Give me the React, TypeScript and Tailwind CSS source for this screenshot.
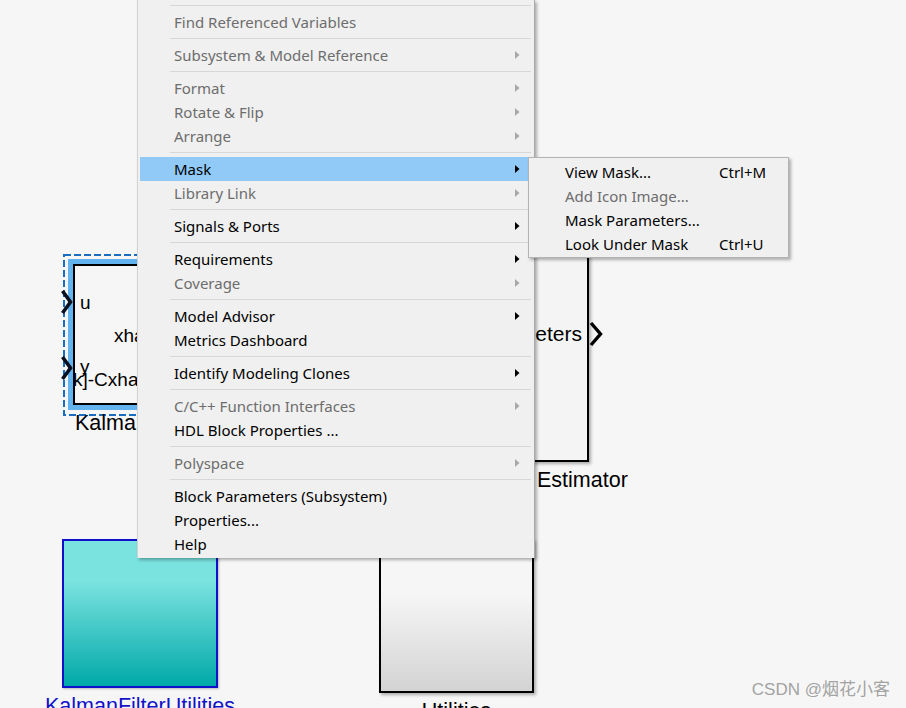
import React from "react";

type Item =
  | { sep: true }
  | { sep?: false; label: string; disabled?: boolean; arrow?: boolean; active?: boolean };

const items: Item[] = [
  { sep: true },
  { label: "Find Referenced Variables", disabled: true },
  { sep: true },
  { label: "Subsystem & Model Reference", disabled: true, arrow: true },
  { sep: true },
  { label: "Format", disabled: true, arrow: true },
  { label: "Rotate & Flip", disabled: true, arrow: true },
  { label: "Arrange", disabled: true, arrow: true },
  { sep: true },
  { label: "Mask", arrow: true, active: true },
  { label: "Library Link", disabled: true, arrow: true },
  { sep: true },
  { label: "Signals & Ports", arrow: true },
  { sep: true },
  { label: "Requirements", arrow: true },
  { label: "Coverage", disabled: true, arrow: true },
  { sep: true },
  { label: "Model Advisor", arrow: true },
  { label: "Metrics Dashboard" },
  { sep: true },
  { label: "Identify Modeling Clones", arrow: true },
  { sep: true },
  { label: "C/C++ Function Interfaces", disabled: true, arrow: true },
  { label: "HDL Block Properties ..." },
  { sep: true },
  { label: "Polyspace", disabled: true, arrow: true },
  { sep: true },
  { label: "Block Parameters (Subsystem)" },
  { label: "Properties..." },
  { label: "Help" },
];

const sub = [
  { label: "View Mask...", key: "Ctrl+M" },
  { label: "Add Icon Image...", disabled: true },
  { label: "Mask Parameters..." },
  { label: "Look Under Mask", key: "Ctrl+U" },
];

const sans = { fontFamily: '"Liberation Sans", Arial, sans-serif' };

function Arrow({ disabled }: { disabled?: boolean }) {
  return (
    <svg width="5" height="8" viewBox="0 0 5 8" className="block">
      <polygon points="0,0 4.5,4 0,8" fill={disabled ? "#a8a8a8" : "#000"} />
    </svg>
  );
}

function Chevron({ className }: { className: string }) {
  return (
    <svg width="14" height="26" viewBox="0 0 14 26" className={className}>
      <polyline points="2.5,2 10.5,13 2.5,24" fill="none" stroke="#0b1020" strokeWidth="3.6" />
    </svg>
  );
}

function KalmanBlock() {
  // selected subsystem node on the diagram canvas
  return (
    <div className="absolute left-[62px] top-[253px] w-[200px] h-[164px]">
      <svg className="absolute inset-0" width="200" height="164">
        <rect x="2" y="2" width="196" height="160" fill="none" stroke="#1a6dbf" strokeWidth="2" strokeDasharray="7 3" />
      </svg>
      <div className="absolute left-[6px] top-[6px] w-[180px] h-[151px] bg-[#63b3ee] p-[5px]">
        <div style={sans} className="relative w-full h-full border-2 border-black bg-[#f6f6f6] text-[19px] leading-none text-black">
          <span className="absolute left-[5px] top-[27px]">u</span>
          <span className="absolute left-[39px] top-[60px]">xhat</span>
          <span className="absolute left-[5px] top-[91px]">y</span>
          <span className="absolute left-[-2px] top-[104px]">k]-Cxhat</span>
        </div>
      </div>
      <Chevron className="absolute left-[-2px] top-[36px]" />
      <Chevron className="absolute left-[-2px] top-[102px]" />
      <div style={sans} className="absolute left-[13px] top-[160px] text-[21.5px] leading-none text-black whitespace-nowrap">
        KalmanFilter
      </div>
    </div>
  );
}

function EstimatorBlock() {
  return (
    <div className="absolute left-[380px] top-[200px] w-[230px] h-[300px]">
      <div style={sans} className="w-[209px] h-[262px] border-2 border-black bg-[#f4f4f4] shadow-[2px_2px_3px_rgba(0,0,0,0.3)] flex items-start justify-end pt-[121px] pr-[5px] text-[21px] leading-none text-black">
        Parameters
      </div>
      <svg width="16" height="28" viewBox="0 0 16 28" className="absolute left-[208px] top-[120px]">
        <polyline points="3,3 12.5,14 3,25" fill="none" stroke="#000" strokeWidth="3.4" />
      </svg>
      <div style={sans} className="absolute left-[157px] top-[270px] text-[21.5px] leading-none text-black">Estimator</div>
    </div>
  );
}

function UtilBlock({
  left,
  boxClass,
  label,
  labelClass,
}: {
  left: string;
  boxClass: string;
  label: string;
  labelClass: string;
}) {
  return (
    <div className={`absolute top-[539px] flex flex-col items-center ${left}`}>
      <div className={boxClass} />
      <div style={sans} className={`mt-[8px] text-[21.5px] leading-none whitespace-nowrap ${labelClass}`}>
        {label}
      </div>
    </div>
  );
}

export default function App() {
  return (
    <div className="relative w-[906px] h-[708px] overflow-hidden bg-[#f6f6f6]">
      <KalmanBlock />
      <EstimatorBlock />

      <UtilBlock
        left="left-[45px]"
        boxClass="w-[156px] h-[149px] border-2 border-[#1010cc] bg-[linear-gradient(to_bottom,#7ae2df_0%,#7ae2df_28%,#00a9a9_100%)] shadow-[1px_1px_2px_rgba(0,0,0,0.25)]"
        label="KalmanFilterUtilities"
        labelClass="text-[#1212c8]"
      />
      <UtilBlock
        left="left-[379px]"
        boxClass="w-[155px] h-[154px] border-2 border-black bg-[linear-gradient(to_bottom,#f6f6f6_0%,#f6f6f6_35%,#d3d3d3_100%)] shadow-[2px_2px_3px_rgba(0,0,0,0.3)]"
        label="Utilities"
        labelClass="text-black"
      />

      {/* Watermark */}
      <div
        style={{ fontFamily: '"Liberation Sans", "Noto Sans CJK SC", sans-serif' }}
        className="absolute right-[16px] top-[681px] text-[17px] leading-none text-[#a3a3a3]"
      >
        CSDN @烟花小客
      </div>

      {/* ===== Context menu ===== */}
      <div
        style={{ fontFamily: '"Noto Sans", sans-serif' }}
        className="absolute left-[137px] top-0 w-[398px] bg-[#f0f0f0] border-l border-[#d2d2d2] border-r border-r-[#a9a9a9] shadow-[2px_2px_3px_rgba(0,0,0,0.3)] pl-[2px] pr-[3px] pt-px pb-[2px] text-[15px]"
      >
        {items.map((it, i) =>
          it.sep ? (
            <div key={i} className="h-[9px] flex items-center pl-[30px]">
              <div className="h-px w-full bg-[#d7d7d7]" />
            </div>
          ) : (
            <div
              key={i}
              className={`h-6 flex items-center justify-between pl-[34px] pr-[11px] ${it.active ? "bg-[#91c9f7]" : ""} ${it.disabled ? "text-[#6d6d6d]" : "text-black"}`}
            >
              <span className="leading-6 whitespace-pre">{it.label}</span>
              {it.arrow ? <Arrow disabled={it.disabled} /> : null}
            </div>
          )
        )}
      </div>

      {/* ===== Submenu ===== */}
      <div
        style={{ fontFamily: '"Noto Sans", sans-serif' }}
        className="absolute left-[528px] top-[157px] w-[261px] bg-[#f0f0f0] border border-[#b3b3b3] shadow-[2px_2px_3px_rgba(0,0,0,0.3)] pt-[2px] pb-px text-[15px]"
      >
        {sub.map((s, i) => (
          <div key={i} className={`h-6 flex items-center pl-[36px] ${s.disabled ? "text-[#6d6d6d]" : "text-black"}`}>
            <span className="w-[154px] leading-6 whitespace-pre">{s.label}</span>
            {s.key ? <span className="leading-6">{s.key}</span> : null}
          </div>
        ))}
      </div>
    </div>
  );
}
